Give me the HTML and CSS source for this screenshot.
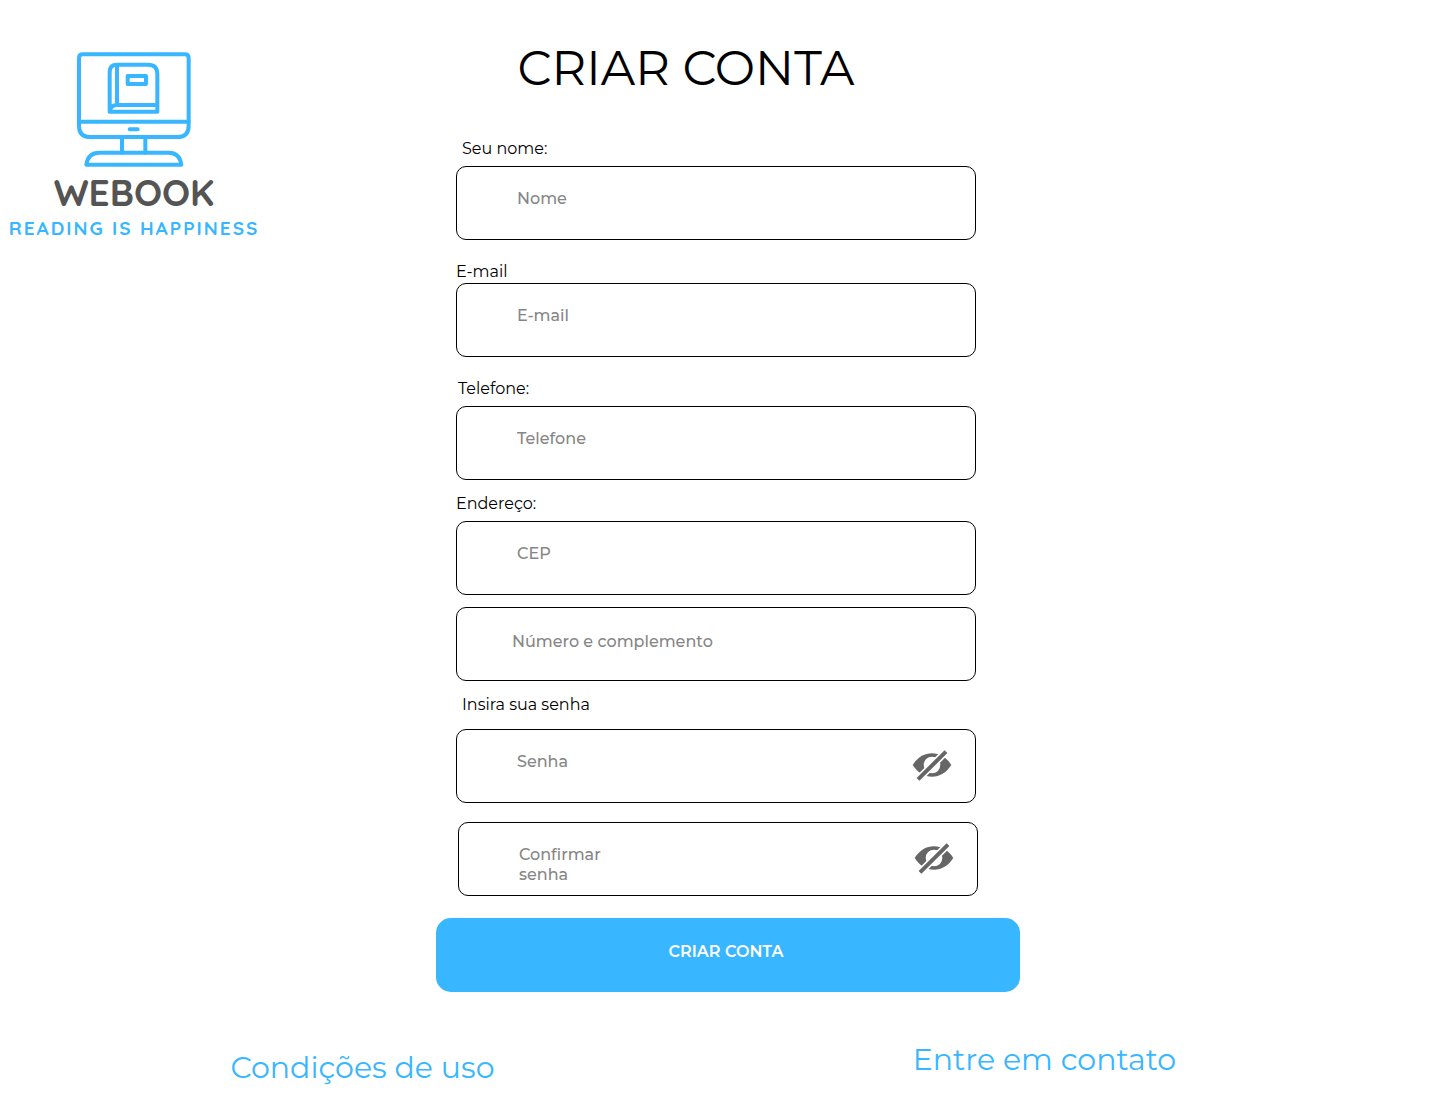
FILE: index.html
```html
<!DOCTYPE html>
<html lang="pt-BR">
<head>
<meta charset="utf-8">
<meta name="viewport" content="width=device-width, initial-scale=1">
<title>Webook - Criar conta</title>
<link rel="stylesheet" href="styles.css">
</head>
<body>
<div class="page">
  <header class="brand">
    <svg class="brand-icon" viewBox="-3 0 390 375" aria-hidden="true">
      <path d="M38 28H345Q356 28 356 39V242Q356 276 322 276H61Q27 276 27 242V39Q27 28 38 28Z"/>
      <path d="M27 230H356M179 253H203M156 276V323M226 276V323"/>
      <path d="M49 359Q54 323 88 323H296Q329 323 334 359Z"/>
      <path d="M119 200V81Q119 59 141 59H234Q262 59 262 87V200ZM141 59V180M119 200Q122 180 141 180H262M173 93H228V117H173Z"/>
    </svg>
    <span class="brand-name">WEBOOK</span>
    <span class="brand-tagline">READING IS HAPPINESS</span>
  </header>

  <main class="signup">
    <h1 class="title">CRIAR CONTA</h1>
    <form class="form">
      <div class="group">
        <label class="label label-indent" for="nome">Seu nome:</label>
        <input class="input" id="nome" type="text" placeholder="Nome">
      </div>
      <div class="group group-spaced group-tight">
        <label class="label" for="email">E-mail</label>
        <input class="input" id="email" type="email" placeholder="E-mail">
      </div>
      <div class="group group-spaced">
        <label class="label label-nudge" for="telefone">Telefone:</label>
        <input class="input" id="telefone" type="tel" placeholder="Telefone">
      </div>
      <div class="group group-address">
        <label class="label" for="cep">Endereço:</label>
        <input class="input" id="cep" type="text" placeholder="CEP">
      </div>
      <div class="group">
        <input class="input input-complement" type="text" placeholder="Número e complemento" aria-label="Número e complemento">
      </div>
      <div class="group group-password">
        <label class="label label-indent" for="senha">Insira sua senha</label>
        <div class="field">
          <input class="input" id="senha" type="password" placeholder="Senha">
          <button class="toggle" type="button" aria-label="Mostrar senha">
            <svg viewBox="0 0 120 96" aria-hidden="true">
              <path class="eye" d="M2 48C18 24 37 13 60 13S102 24 118 48C102 72 83 83 60 83S18 72 2 48Z"/>
              <circle class="iris" cx="60" cy="48" r="25"/>
              <path class="gap" d="M13 96L108 2"/>
              <path class="slash" d="M18 91L102 8"/>
            </svg>
          </button>
        </div>
      </div>
      <div class="group group-confirm">
        <div class="field">
          <input class="input" id="confirmar" type="password" placeholder=" ">
          <label class="hint" for="confirmar">Confirmar<br>senha</label>
          <button class="toggle" type="button" aria-label="Mostrar confirmação de senha">
            <svg viewBox="0 0 120 96" aria-hidden="true">
              <path class="eye" d="M2 48C18 24 37 13 60 13S102 24 118 48C102 72 83 83 60 83S18 72 2 48Z"/>
              <circle class="iris" cx="60" cy="48" r="25"/>
              <path class="gap" d="M13 96L108 2"/>
              <path class="slash" d="M18 91L102 8"/>
            </svg>
          </button>
        </div>
      </div>
      <button class="submit" type="submit">CRIAR CONTA</button>
    </form>
  </main>
</div>

<footer class="footer">
  <a class="footer-link footer-terms" href="#condicoes">Condições de uso</a>
  <a class="footer-link" href="#contato">Entre em contato</a>
</footer>
</body>
</html>
```
FILE: styles.css
```css
* {
  box-sizing: border-box;
}

body {
  margin: 0;
  background: #fff;
  color: #000;
  font-family: Montserrat, Inter, "Open Sans", sans-serif;
  font-size: 16px;
  line-height: 20px;
}

.page {
  display: grid;
  grid-template-columns: minmax(268px, 436fr) minmax(0, 584px) minmax(0, 420fr);
}

/* Brand */
.brand {
  display: flex;
  flex-direction: column;
  align-items: center;
  justify-self: start;
  width: 268px;
  padding-top: 45px;
  font-family: Quicksand, Montserrat, Inter, sans-serif;
}

.brand-icon {
  width: 130px;
  height: 125px;
  fill: none;
  stroke: #38b6ff;
  stroke-width: 12;
  stroke-linecap: round;
  stroke-linejoin: round;
}

.brand-name {
  color: #545454;
  font-size: 37px;
  font-weight: 700;
  line-height: 44px;
}

.brand-tagline {
  color: #38b6ff;
  font-size: 19px;
  font-weight: 700;
  line-height: 28px;
  letter-spacing: 2px;
  white-space: nowrap;
}

/* Sign-up form */
.title {
  margin: 38px 0 41px;
  padding-right: 84px;
  font-size: 48px;
  font-weight: 400;
  line-height: 60px;
  text-align: center;
}

.form {
  display: flex;
  flex-direction: column;
  gap: 12px;
}

.group {
  display: flex;
  flex-direction: column;
  gap: 7px;
  margin: 0 44px 0 20px;
}

.group-spaced {
  margin-top: 10px;
}

.group-address {
  margin-top: 2px;
}

.group-tight {
  gap: 1px;
}

.group-password {
  gap: 14px;
  margin-top: 2px;
}

.group-confirm {
  margin: 7px 42px 10px 22px;
}

.label-indent {
  padding-left: 6px;
}

.label-nudge {
  padding-left: 2px;
}

.field {
  position: relative;
}

.input {
  display: block;
  width: 100%;
  height: 74px;
  padding: 0 60px 10px;
  border: 1px solid #000;
  border-radius: 10px;
  background: #fff;
  color: #000;
  font: inherit;
  font-weight: 500;
}

.input::placeholder {
  color: #868686;
  opacity: 1;
}

.input-complement {
  padding: 0 55px 6px;
}

.hint {
  position: absolute;
  top: 23px;
  left: 61px;
  color: #868686;
  font-weight: 500;
  visibility: hidden;
}

.input:placeholder-shown + .hint {
  visibility: visible;
}

.toggle {
  position: absolute;
  top: 20px;
  right: 24px;
  padding: 0;
  border: 0;
  background: none;
  cursor: pointer;
}

.toggle svg {
  display: block;
  width: 40px;
  height: 32px;
}

.eye {
  fill: #666;
}

.iris {
  fill: #fff;
}

.gap,
.slash {
  fill: none;
  stroke: #fff;
  stroke-width: 22;
}

.slash {
  stroke: #666;
  stroke-width: 12;
}

.submit {
  height: 74px;
  padding: 0 4px 6px 0;
  border: 0;
  border-radius: 15px;
  background: #38b6ff;
  color: #fff;
  font: inherit;
  font-weight: 600;
  cursor: pointer;
}

/* Footer */
.footer {
  display: grid;
  grid-template-columns: 682fr 527fr;
  padding: 48px 0 14px 16%;
}

.footer-link {
  justify-self: start;
  color: #38b6ff;
  font-size: 30px;
  font-weight: 400;
  line-height: 40px;
  text-decoration: none;
}

.footer-terms {
  padding-top: 8px;
}
```
